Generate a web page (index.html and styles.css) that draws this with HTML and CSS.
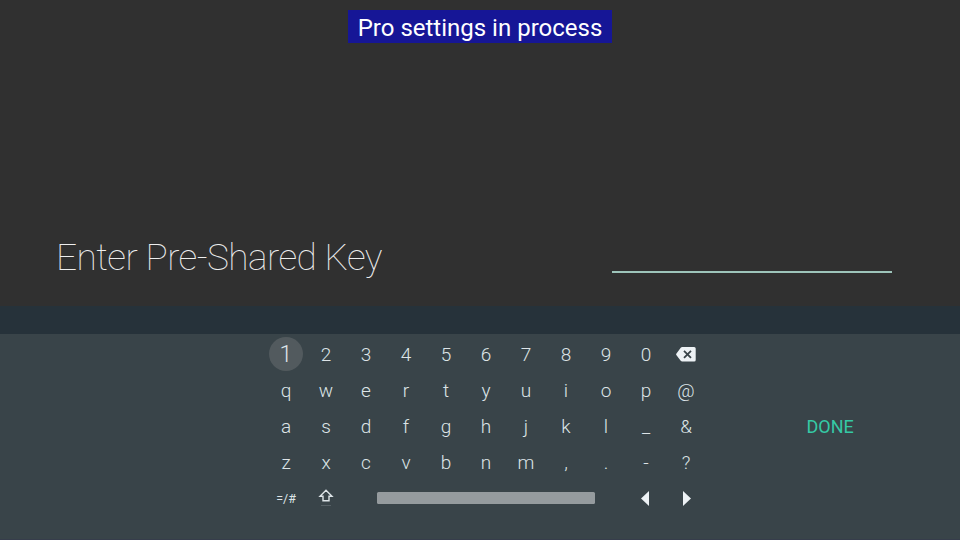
FILE: index.html
```html
<!DOCTYPE html>
<html lang="en">
<head>
<meta charset="utf-8">
<title>Enter Pre-Shared Key</title>
<link rel="stylesheet" href="styles.css">
</head>
<body>
<main class="prompt">
  <div class="banner">Pro settings in process</div>
  <div class="field-row">
    <h1 class="title">Enter Pre-Shared Key</h1>
    <div class="field"></div>
  </div>
</main>
<div class="suggestions"></div>
<section class="keyboard">
  <div class="keys">
    <span class="key"><span class="focused">1</span></span><span class="key">2</span><span class="key">3</span><span class="key">4</span><span class="key">5</span><span class="key">6</span><span class="key">7</span><span class="key">8</span><span class="key">9</span><span class="key">0</span>
    <span class="key"><svg class="backspace" width="20" height="15" viewBox="0 0 20 15"><path class="solid" d="M6.2 0H18.2Q19.7 0 19.7 1.5V13Q19.7 14.5 18.2 14.5H6.2Q5.3 14.5 4.7 13.7L0.3 7.9Q-.1 7.3 .3 6.7L4.7 .8Q5.3 0 6.2 0Z"/><path class="cross" d="M8 3.8L15 10.8M15 3.8L8 10.8"/></svg></span>
    <span class="key">q</span><span class="key">w</span><span class="key">e</span><span class="key">r</span><span class="key">t</span><span class="key">y</span><span class="key">u</span><span class="key">i</span><span class="key">o</span><span class="key">p</span><span class="key">@</span>
    <span class="key">a</span><span class="key">s</span><span class="key">d</span><span class="key">f</span><span class="key">g</span><span class="key">h</span><span class="key">j</span><span class="key">k</span><span class="key">l</span><span class="key">_</span><span class="key">&amp;</span>
    <span class="key">z</span><span class="key">x</span><span class="key">c</span><span class="key">v</span><span class="key">b</span><span class="key">n</span><span class="key">m</span><span class="key">,</span><span class="key">.</span><span class="key">-</span><span class="key">?</span>
    <span class="key symbols">=/#</span>
    <span class="key shift-key"><svg class="shift" width="16" height="18" viewBox="0 0 16 18"><path class="outline" d="M8 1.2L14 7.3H11V11.7H5V7.3H2Z"/><path class="lock" d="M3 16.5H13"/></svg></span>
    <span class="key space"><span class="space-bar"></span></span>
    <span class="key arrow-left"><svg width="8" height="15" viewBox="0 0 8 15"><path class="solid" d="M8 0V15L0 7.5Z"/></svg></span>
    <span class="key arrow-right"><svg width="8" height="15" viewBox="0 0 8 15"><path class="solid" d="M0 0V15L8 7.5Z"/></svg></span>
  </div>
  <div class="done">DONE</div>
</section>
</body>
</html>
```
FILE: styles.css
```css
* { box-sizing: border-box; }
body {
  margin: 0;
  width: 960px;
  height: 540px;
  overflow: hidden;
  display: flex;
  flex-direction: column;
  background: #303030;
  font-family: Roboto, sans-serif;
}
.prompt {
  height: 306px;
  padding-top: 10px;
  display: flex;
  flex-direction: column;
  align-items: center;
}
.banner {
  width: 264px;
  height: 33px;
  line-height: 36px;
  text-align: center;
  white-space: nowrap;
  font-size: 24px;
  color: #fff;
  background: #161696;
}
.field-row {
  width: 100%;
  margin-top: 190px;
  height: 40px;
  padding: 0 68px 0 56px;
  display: flex;
  justify-content: space-between;
}
.title {
  margin: 0;
  font-size: 37px;
  line-height: 50px;
  font-weight: 100;
  letter-spacing: -0.57px;
  white-space: nowrap;
  color: #eee;
}
.field {
  width: 280px;
  border-bottom: 2px solid #9dc4ba;
}
.suggestions { height: 28px; background: #26323a; }
.keyboard {
  height: 206px;
  display: flex;
  background: #394449;
  border-bottom: 1px solid #363d4b;
}
.keys {
  width: 440px;
  margin-left: 266px;
  padding-top: 2px;
  display: grid;
  grid-template-columns: repeat(11, 40px);
  grid-template-rows: repeat(4, 36px) 36px;
  align-content: start;
}
.key {
  display: flex;
  align-items: center;
  justify-content: center;
  font-size: 19px;
  font-weight: 300;
  color: #dde4e7;
}
.focused {
  width: 34px;
  height: 34px;
  flex: none;
  border-radius: 50%;
  background: #525a5e;
  text-align: center;
  font-size: 23px;
  line-height: 36px;
}
.symbols { font-size: 12.5px; font-weight: 400; }
.shift-key { padding-bottom: 1px; }
.space { grid-column: 3 / 10; }
.space-bar {
  width: 218px;
  height: 12px;
  border-radius: 1.5px;
  background: #959b9e;
}
.arrow-right { padding-left: 2px; }
.arrow-left { padding-right: 2px; }
.solid { fill: #edf2f5; }
.cross { stroke: #394449; stroke-width: 1.8; }
.outline { fill: none; stroke: #dde4e7; stroke-width: 1.4; }
.lock { stroke: #566065; stroke-width: 1; }
.done {
  margin-left: 100.5px;
  padding-top: 82px;
  font-size: 18px;
  line-height: 22px;
  color: #35c9a5;
}
```
